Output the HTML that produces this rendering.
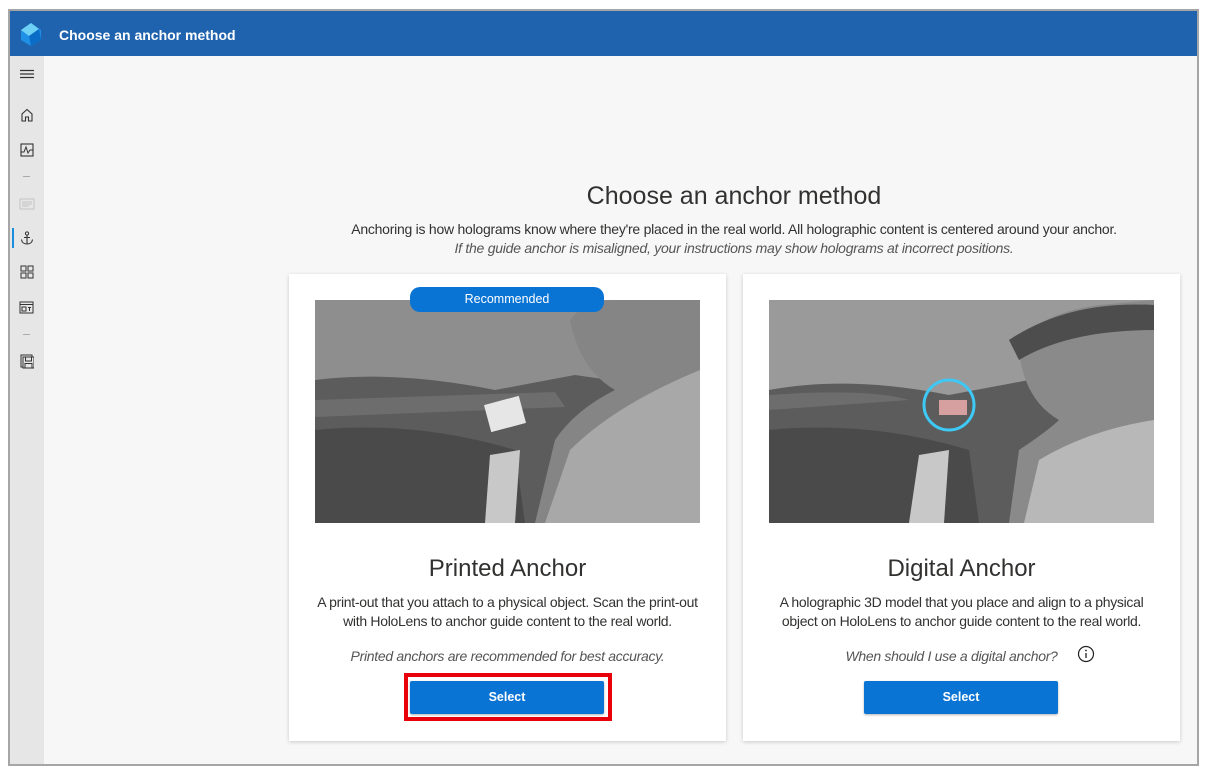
<!DOCTYPE html>
<html><head><meta charset="utf-8"><style>
*{margin:0;padding:0;box-sizing:border-box}
body{width:1207px;height:771px;background:#fff;font-family:"Liberation Sans",sans-serif;position:relative;overflow:hidden;color:#323130}
.frame{position:absolute;left:8px;top:9px;width:1191px;height:757px;border:2px solid #a6a6a6;background:#f7f7f7}
.hdr{position:absolute;left:10px;top:11px;width:1187px;height:45px;background:#1f63ae;color:#fff;font-size:14px;font-weight:bold}
.hdr span{position:absolute;left:49px;top:16px}
.side{position:absolute;left:10px;top:56px;width:34px;height:708px;background:#e6e6e6}
.ab{position:absolute;text-align:center;width:900px;left:284px}
.card{position:absolute;top:274px;width:437px;height:467px;background:#fff;box-shadow:0 1px 4px rgba(0,0,0,.18)}
.img{position:absolute;left:26px;top:26px;width:385px;height:223px}
.t{position:absolute;left:0;width:100%;text-align:center}
.btn{position:absolute;left:121px;top:407px;width:194px;height:33px;background:#0a74d4;color:#fff;font-size:12.5px;font-weight:bold;text-align:center;line-height:33px;border-radius:2px;box-shadow:0 1px 2px rgba(0,0,0,.3)}
.ic{position:absolute;left:19px}
</style></head><body>
<div class="frame"></div>
<div class="hdr"><svg style="position:absolute;left:7px;top:9px" width="28" height="28" viewBox="0 0 28 28"><path d="M4 10 L14 3 L24 10 L24 20 L14 26 L4 20Z" fill="#1e90e6"/><path d="M4 10 L14 3 L22 9 L12 16Z" fill="#6fd0f5"/><path d="M12 16 L22 9 L24 20 L14 26Z" fill="#0b6cc7"/></svg><span>Choose an anchor method</span></div>
<div class="side">
<svg class="ic" style="left:10px;top:13px" width="14" height="10"><path d="M0 1.5H14M0 5H14M0 8.5H14" stroke="#333" stroke-width="1.2"/></svg>
<svg style="position:absolute;left:10px;top:52px" width="14" height="14"><path d="M2 13V6L7 1.5L12 6V13H8.5V9H5.5V13Z" fill="none" stroke="#333" stroke-width="1.1"/></svg>
<svg style="position:absolute;left:10px;top:87px" width="14" height="14"><rect x="1" y="1" width="12" height="12" fill="none" stroke="#333" stroke-width="1.1"/><path d="M1 9H4L6 4L8 10L10 7H13" fill="none" stroke="#333"/></svg>
<div style="position:absolute;left:13px;top:120px;width:7px;height:1px;background:#aaa"></div>
<svg style="position:absolute;left:9px;top:142px" width="16" height="12"><rect x="1" y="1" width="14" height="10" fill="none" stroke="#c4c4c4"/><path d="M3 4H13M3 6H13M3 8H10" stroke="#c4c4c4"/></svg>
<div style="position:absolute;left:2px;top:172px;width:2px;height:20px;background:#1a8fe0"></div>
<svg style="position:absolute;left:10px;top:175px" width="14" height="15"><circle cx="7" cy="2.5" r="1.6" fill="none" stroke="#333"/><path d="M7 4V13M4 6.5H10M1.5 8.5Q2 13 7 13Q12 13 12.5 8.5" fill="none" stroke="#333" stroke-width="1.1"/></svg>
<svg style="position:absolute;left:10px;top:209px" width="14" height="14"><rect x="1" y="1" width="5" height="5" fill="none" stroke="#333"/><rect x="8" y="1" width="5" height="5" fill="none" stroke="#333"/><rect x="1" y="8" width="5" height="5" fill="none" stroke="#333"/><rect x="8" y="8" width="5" height="5" fill="none" stroke="#333"/></svg>
<svg style="position:absolute;left:9px;top:245px" width="15" height="13"><rect x="1" y="1" width="13" height="11" fill="none" stroke="#333"/><path d="M1 3.5H14" stroke="#333"/><rect x="3" y="6" width="4" height="4" fill="none" stroke="#333"/><path d="M9 6.5H12M10.5 6.5V10" stroke="#333"/></svg>
<div style="position:absolute;left:13px;top:278px;width:7px;height:1px;background:#aaa"></div>
<svg style="position:absolute;left:10px;top:298px" width="14" height="15"><rect x="1" y="1" width="11" height="12" fill="none" stroke="#333"/><rect x="3" y="3" width="11" height="11" fill="#e6e6e6" stroke="#333"/><rect x="5.5" y="3" width="6" height="4" fill="none" stroke="#333"/><rect x="5" y="9.5" width="7" height="4.5" fill="none" stroke="#333"/></svg>
</div>
<div class="ab" style="top:182px;font-size:25px">Choose an anchor method</div>
<div class="ab" style="top:221px;font-size:14px;letter-spacing:-0.25px">Anchoring is how holograms know where they're placed in the real world. All holographic content is centered around your anchor.</div>
<div class="ab" style="top:240px;font-size:14px;font-style:italic;color:#555;letter-spacing:-0.25px">If the guide anchor is misaligned, your instructions may show holograms at incorrect positions.</div>

<div class="card" style="left:289px">
<svg class="img" viewBox="0 0 385 223"><rect width="385" height="223" fill="#8e8e8e"/><path d="M0 80 Q80 70 180 90 L260 75 L330 85 L330 223 L0 223Z" fill="#5c5c5c"/><path d="M0 130 Q100 120 200 150 L210 223 L0 223Z" fill="#4a4a4a"/><path d="M0 100 L240 92 L250 107 L0 117Z" fill="#6d6d6d"/><path d="M255 20 Q270 0 300 0 L385 0 L385 223 L220 223 L240 140 Q260 110 300 90 Q265 70 255 20Z" fill="#858585"/><path d="M230 223 L255 150 Q300 105 385 70 L385 223Z" fill="#a8a8a8"/><path d="M175 155 L205 150 L200 223 L170 223Z" fill="#c8c8c8"/><rect x="172" y="100" width="36" height="28" fill="#e6e6e6" transform="rotate(-15 190 114)"/></svg>
<div style="position:absolute;left:121px;top:13px;width:194px;height:25px;background:#0a74d4;border-radius:10px;color:#fff;font-size:12.5px;text-align:center;line-height:25px">Recommended</div>
<div class="t" style="top:281px;font-size:24px">Printed Anchor</div>
<div class="t" style="top:319px;font-size:14px;line-height:19px;padding:0 22px;letter-spacing:-0.3px">A print-out that you attach to a physical object. Scan the print-out with HoloLens to anchor guide content to the real world.</div>
<div class="t" style="top:374px;font-size:14px;font-style:italic;color:#555;letter-spacing:-0.3px">Printed anchors are recommended for best accuracy.</div>
<div style="position:absolute;left:115px;top:399px;width:208px;height:48px;border:4px solid #e8000b"></div>
<div class="btn">Select</div>
</div>

<div class="card" style="left:743px">
<svg class="img" viewBox="0 0 385 223"><rect width="385" height="223" fill="#9a9a9a"/><path d="M0 90 Q80 75 180 95 L260 80 L330 90 L330 223 L0 223Z" fill="#5c5c5c"/><path d="M0 130 Q100 120 200 150 L210 223 L0 223Z" fill="#4a4a4a"/><path d="M0 95 Q100 88 140 100 L0 110Z" fill="#6d6d6d"/><path d="M250 50 Q260 15 330 5 L385 0 L385 223 L240 223 L250 150 Q280 130 290 120 Q255 100 250 50Z" fill="#8a8a8a"/><path d="M240 40 Q300 0 385 5 L385 30 Q300 30 250 60Z" fill="#4d4d4d"/><path d="M255 223 L270 160 Q320 130 385 120 L385 223Z" fill="#b8b8b8"/><path d="M150 155 L180 150 L175 223 L140 223Z" fill="#c8c8c8"/><circle cx="180" cy="105" r="25" fill="none" stroke="#3ec8f5" stroke-width="3"/><rect x="170" y="100" width="28" height="15" fill="#d6a0a0"/></svg>
<div class="t" style="top:281px;font-size:24px">Digital Anchor</div>
<div class="t" style="top:319px;font-size:14px;line-height:19px;padding:0 22px;letter-spacing:-0.3px">A holographic 3D model that you place and align to a physical object on HoloLens to anchor guide content to the real world.</div>
<div class="t" style="top:374px;font-size:14px;font-style:italic;color:#555;letter-spacing:-0.3px"><span style="position:relative;left:-10px">When should I use a digital anchor?</span></div>
<svg style="position:absolute;left:334px;top:371px" width="18" height="18"><circle cx="9" cy="9" r="7.5" fill="none" stroke="#222" stroke-width="1.2"/><circle cx="9" cy="5.5" r="0.9" fill="#222"/><path d="M9 8V13" stroke="#222" stroke-width="1.3"/></svg>
<div class="btn">Select</div>
</div>
</body></html>
